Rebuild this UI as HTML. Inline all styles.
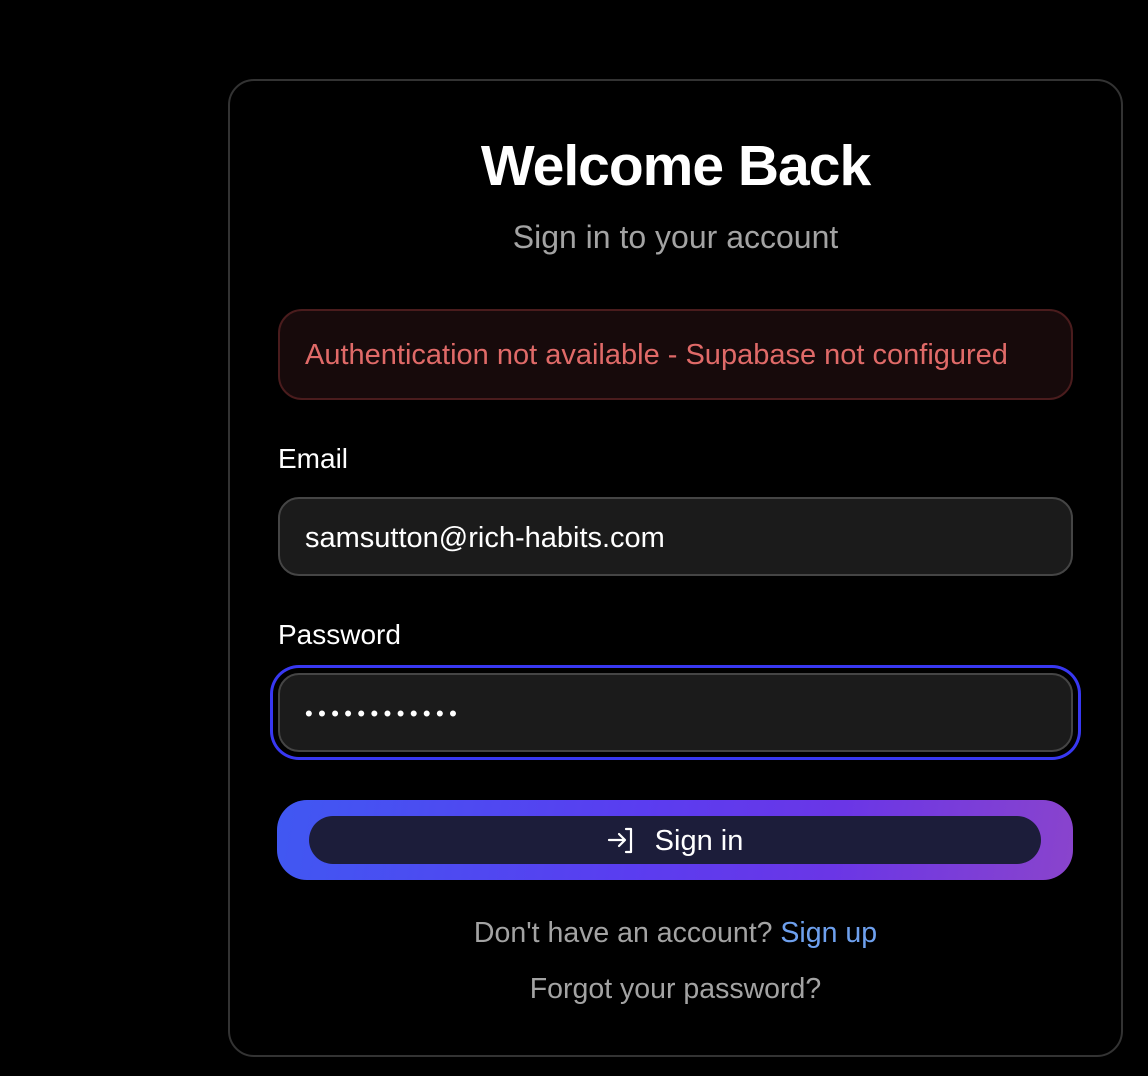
<!DOCTYPE html>
<html><head><meta charset="utf-8"><style>
*{box-sizing:border-box;margin:0;padding:0}
body{width:1148px;height:1076px;background:#000;font-family:"Liberation Sans",sans-serif;position:relative;overflow:hidden;color:#fff}
.card{position:absolute;left:228px;top:79px;width:895px;height:978px;border:2px solid #333;border-radius:26px}
.abs{position:absolute}
h1{position:absolute;left:228px;width:895px;top:133px;text-align:center;font-size:57px;font-weight:bold;letter-spacing:-1px}
.sub{top:219px;left:228px;width:895px;text-align:center;font-size:32px;color:#a3a3a3}
.err{left:278px;top:309px;width:795px;height:91px;background:#170a0b;border:2px solid #4a1c1d;border-radius:24px;color:#e06a68;font-size:29px;padding-left:25px;line-height:89px}
.lbl{left:278px;font-size:28px;color:#fff}
.inp{left:278px;width:795px;height:79px;background:#1b1b1b;border:2px solid #454545;border-radius:21px;font-size:29px;padding-left:25px;line-height:79px}
.btn{left:277px;top:800px;width:796px;height:80px;border-radius:30px;background:linear-gradient(100deg,#4058f2 0%,#5a3df0 45%,#6a36e6 70%,#8a44cc 100%)}
.inner{left:309px;top:816px;width:732px;height:48px;border-radius:24px;background:#1c1d3a;display:flex;align-items:center;justify-content:center;font-size:29px;padding-top:2px}
.foot{left:228px;width:895px;text-align:center;font-size:28.5px;color:#a3a3a3}
</style></head><body>
<div class="card"></div>
<h1>Welcome Back</h1>
<div class="abs sub">Sign in to your account</div>
<div class="abs err">Authentication not available - Supabase not configured</div>
<div class="abs lbl" style="top:443px">Email</div>
<div class="abs inp" style="top:497px">samsutton@rich-habits.com</div>
<div class="abs lbl" style="top:619px">Password</div>
<div class="abs inp" style="top:673px;box-shadow:0 0 0 5px #000,0 0 0 8px #3838f2;font-size:22px;letter-spacing:5.4px;line-height:78px">••••••••••••</div>
<div class="abs btn"></div>
<div class="abs inner"><svg width="30" height="28" viewBox="0 0 30 28" style="margin-right:18px" fill="none" stroke="#fff" stroke-width="2.2" stroke-linecap="round" stroke-linejoin="round"><path d="M2 13h15M12 7l6 6-6 6M19 2h5v23h-5"/></svg>Sign in</div>
<div class="abs foot" style="top:917px">Don't have an account? <span style="color:#6ea0ee">Sign up</span></div>
<div class="abs foot" style="top:973px">Forgot your password?</div>
</body></html>
